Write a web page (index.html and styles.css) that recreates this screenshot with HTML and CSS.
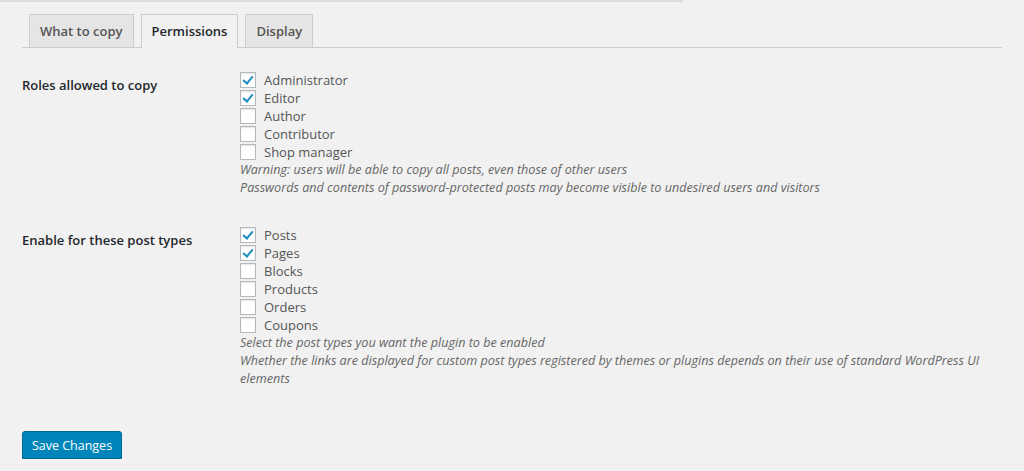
FILE: index.html
```html
<!DOCTYPE html>
<html lang="en">
<head>
    <meta charset="UTF-8">
    <meta name="viewport" content="width=device-width, initial-scale=1.0">
    <title>Duplicate Post Options</title>
    <link rel="stylesheet" href="styles.css">
</head>
<body>
    <div class="top-rule"></div>
    <div class="wrap">
        <nav class="nav-tabs">
            <a class="nav-tab" href="#">What to copy</a>
            <a class="nav-tab active" href="#">Permissions</a>
            <a class="nav-tab" href="#">Display</a>
        </nav>

        <form class="form-table">
            <div class="row">
                <div class="row-label">Roles allowed to copy</div>
                <div class="row-field">
                    <label class="check"><span class="box checked"></span>Administrator</label>
                    <label class="check"><span class="box checked"></span>Editor</label>
                    <label class="check"><span class="box"></span>Author</label>
                    <label class="check"><span class="box"></span>Contributor</label>
                    <label class="check"><span class="box"></span>Shop manager</label>
                    <p class="description">Warning: users will be able to copy all posts, even those of other users<br>
                    Passwords and contents of password-protected posts may become visible to undesired users and visitors</p>
                </div>
            </div>

            <div class="row">
                <div class="row-label">Enable for these post types</div>
                <div class="row-field">
                    <label class="check"><span class="box checked"></span>Posts</label>
                    <label class="check"><span class="box checked"></span>Pages</label>
                    <label class="check"><span class="box"></span>Blocks</label>
                    <label class="check"><span class="box"></span>Products</label>
                    <label class="check"><span class="box"></span>Orders</label>
                    <label class="check"><span class="box"></span>Coupons</label>
                    <p class="description">Select the post types you want the plugin to be enabled<br>
                    Whether the links are displayed for custom post types registered by themes or plugins depends on their use of standard WordPress UI elements</p>
                </div>
            </div>

            <div class="submit">
                <button type="button" class="button-primary">Save Changes</button>
            </div>
        </form>
    </div>
</body>
</html>
```

FILE: styles.css
```css
body {
    font-family: 'Open Sans', 'Liberation Sans', sans-serif;
    font-size: 13px;
    color: #444;
    margin: 0;
    background: #f1f1f1;
}

.top-rule {
    width: 683px;
    height: 1px;
    border-bottom: 2px solid #dcdcdc;
    margin-top: -1px;
}

.wrap {
    margin: 0 22px;
}

.nav-tabs {
    display: flex;
    gap: 7px;
    padding-left: 7px;
    margin-top: 12px;
    border-bottom: 1px solid #ccc;
}

.nav-tab {
    display: block;
    padding: 5px 10px;
    font-size: 13px;
    font-weight: 600;
    line-height: 22px;
    color: #555;
    text-decoration: none;
    background: #e5e5e5;
    border: 1px solid #ccc;
    border-bottom: none;
}

.nav-tab.active {
    background: #f1f1f1;
    color: #23282d;
    margin-bottom: -1px;
    padding-bottom: 6px;
}

.form-table {
    margin-top: 8px;
}

.row {
    display: grid;
    grid-template-columns: 218px 1fr;
    padding: 15px 0 14px;
}

.row-label {
    font-weight: 600;
    color: #23282d;
    padding-top: 5px;
}

.row-field {
    padding-right: 12px;
}

.check {
    display: flex;
    align-items: center;
    gap: 8px;
    height: 18px;
    line-height: 18px;
    color: #555;
}

.box {
    width: 16px;
    height: 16px;
    box-sizing: border-box;
    border: 1px solid #b4b9be;
    background: #fff;
    box-shadow: inset 0 1px 2px rgba(0, 0, 0, 0.1);
    position: relative;
}

.box.checked::after {
    content: "";
    position: absolute;
    left: 4px;
    top: 1px;
    width: 4px;
    height: 8px;
    border: solid #1e8cbe;
    border-width: 0 2px 2px 0;
    transform: rotate(40deg);
}

.description {
    margin: 0;
    font-size: 12.6px;
    font-style: italic;
    color: #666;
    line-height: 18px;
}

.submit {
    padding-top: 29px;
}

.button-primary {
    font-family: inherit;
    font-size: 12.5px;
    white-space: nowrap;
    color: #fff;
    background: #0085ba;
    border: 1px solid #006799;
    border-radius: 3px;
    box-shadow: 0 1px 0 #006799;
    height: 28px;
    width: 100px;
    padding: 0;
}
```
